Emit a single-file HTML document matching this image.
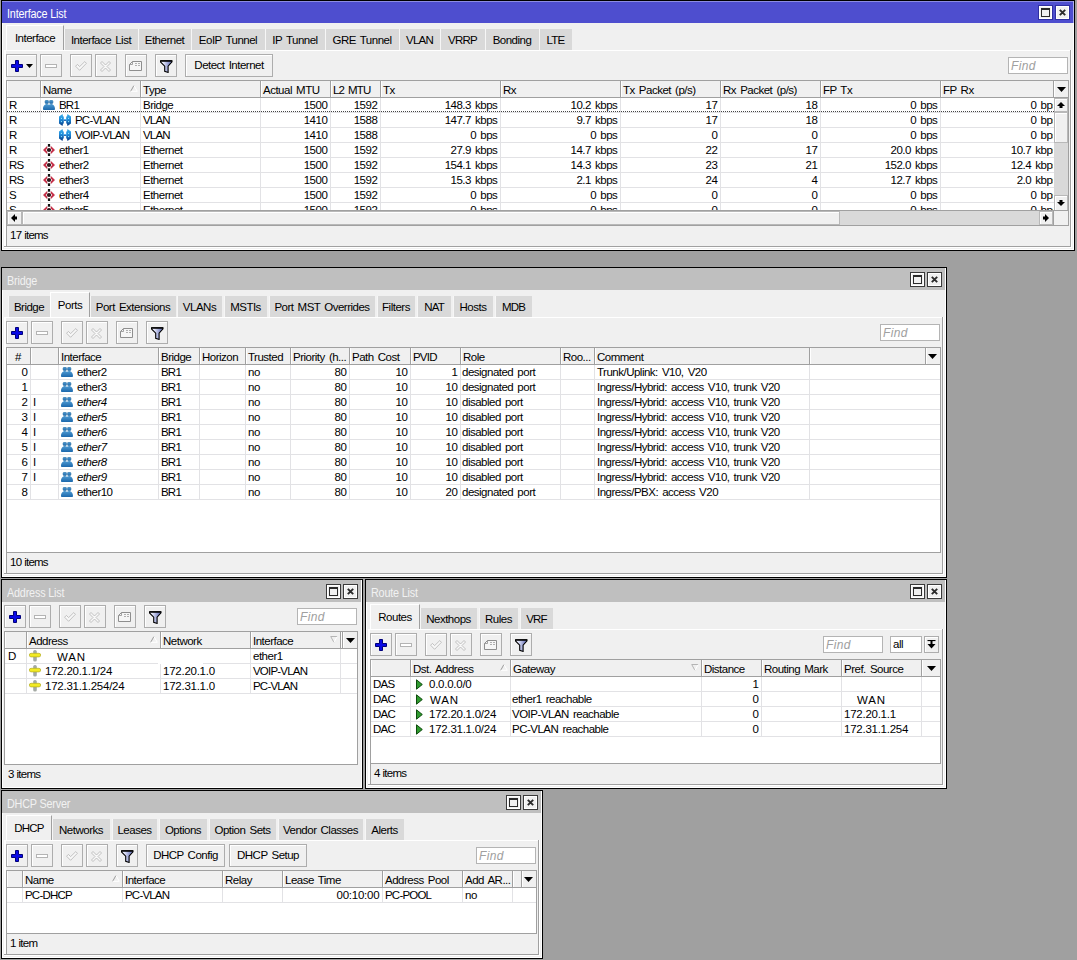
<!DOCTYPE html>
<html><head><meta charset="utf-8"><title>WinBox</title>
<style>
html,body{margin:0;padding:0}
body{width:1077px;height:960px;overflow:hidden;background:#a0a0a0;position:relative;font-family:"Liberation Sans",sans-serif;font-size:11px;color:#000}
div,svg{position:absolute;box-sizing:content-box}
.fr{background:#000}
.wn{background:#fff}
.bg{background:#f0f0f0}
.ta{background:#4e4ecf}
.ti{background:#bfbfbf}
.t{height:15px;line-height:15px;white-space:nowrap;letter-spacing:-.5px;word-spacing:1.4px;font-size:11.5px}
.tt{height:15px;line-height:15px;white-space:nowrap;color:#fff;font-size:12px;letter-spacing:-.2px;transform:scaleX(.9);transform-origin:0 0}
.tt.i{color:#f2f2f2}
.n{letter-spacing:-.25px}
.u{letter-spacing:-.8px}
.s{letter-spacing:-.75px;word-spacing:.4px}
.c{text-align:center}
.r{text-align:right}
.it{font-style:italic}
.fi{font-style:italic;color:#a0a0a0;font-size:12px;letter-spacing:.35px}
.b{border:1px solid #adadad;background:#f0f0f0;box-shadow:inset 1px 1px 0 #fff}
.wb{border:1px solid #3a3a3a;background:#f0f0f0;box-shadow:inset 1px 1px 0 #fff,inset -1px -1px 0 #fff}
.wa{border-color:#2e2ea2}
.tab{background:#d9d9d9;border-left:1px solid #f6f6f6}
.tab.a{background:#f0f0f0;border-left:1px solid #fff;border-top:1px solid #fff;border-right:1px solid #a0a0a0}
.fd{border:1px solid #b4b4b4;background:#fff}
.hd{background:#f0f0f0;border-left:1px solid #fff;border-right:1px solid #a0a0a0}
.gl{background:#e2e2e5}
.ln{background:#a0a0a0}
.wl{background:#fff}
.tb{background:#fff;border:1px solid #a0a0a0}
.sb{background:#d9d9d9}
.th{background:#f0f0f0;border:1px solid #b8b8b8;box-shadow:inset 1px 1px 0 #fff}
</style></head>
<body>
<div class="fr" style="left:1px;top:0px;width:1074px;height:251px;"></div>
<div class="wn" style="left:2px;top:1px;width:1072px;height:249px;"></div>
<div class="bg" style="left:3px;top:1px;width:1070px;height:248px;"></div>
<div class="ta" style="left:2px;top:1px;width:1071px;height:22px;"></div>
<div class="tt" style="left:7px;top:7px;">Interface List</div>
<div class="wb wa" style="left:1038px;top:5px;width:13px;height:13px;"></div>
<div class="wb wa" style="left:1055px;top:5px;width:13px;height:13px;"></div>
<svg style="left:1041px;top:8px" width="9" height="9" viewBox="0 0 9 9"><rect x=".5" y="1" width="8" height="7.500" fill="#f0f0f0" stroke="#2a2a2a" stroke-width="1"/><rect x="0" y="0" width="9" height="2" fill="#2a2a2a"/></svg>
<svg style="left:1059px;top:9px" width="7" height="7" viewBox="0 0 7 7"><path d="M.8 .8 L6.200 6.200 M6.200 .8 L.8 6.200" stroke="#2a2a2a" stroke-width="1.900"/></svg>
<div style="left:2px;top:1px;width:1071px;height:1px;background:#8c8ce4"></div>
<div style="left:1073px;top:1px;width:1px;height:22px;background:#b0b0ec"></div>
<div class="wl" style="left:4px;top:50px;width:1066px;height:1px;"></div>
<div class="wl" style="left:4px;top:50px;width:2px;height:197px;"></div>
<div class="ln" style="left:1070px;top:50px;width:1px;height:197px;"></div>
<div class="ln" style="left:4px;top:246px;width:1067px;height:1px;"></div>
<div class="wl" style="left:1071px;top:50px;width:1px;height:198px;"></div>
<div class="wl" style="left:4px;top:247px;width:1068px;height:1px;"></div>
<div class="tab a" style="left:6px;top:25px;width:56px;height:24px;"></div>
<div class="t c" style="left:8px;top:31px;width:54px;">Interface</div>
<div class="tab" style="left:64px;top:29px;width:73px;height:21px;"></div>
<div class="t c" style="left:64px;top:33px;width:74px;">Interface List</div>
<div class="tab" style="left:138px;top:29px;width:52px;height:21px;"></div>
<div class="t c" style="left:138px;top:33px;width:53px;">Ethernet</div>
<div class="tab" style="left:191px;top:29px;width:73px;height:21px;"></div>
<div class="t c" style="left:191px;top:33px;width:74px;">EoIP Tunnel</div>
<div class="tab" style="left:265px;top:29px;width:59px;height:21px;"></div>
<div class="t c" style="left:265px;top:33px;width:60px;">IP Tunnel</div>
<div class="tab" style="left:325px;top:29px;width:73px;height:21px;"></div>
<div class="t c" style="left:325px;top:33px;width:74px;">GRE Tunnel</div>
<div class="tab" style="left:399px;top:29px;width:40px;height:21px;"></div>
<div class="t c u" style="left:399px;top:33px;width:41px;">VLAN</div>
<div class="tab" style="left:440px;top:29px;width:44px;height:21px;"></div>
<div class="t c u" style="left:440px;top:33px;width:45px;">VRRP</div>
<div class="tab" style="left:485px;top:29px;width:53px;height:21px;"></div>
<div class="t c" style="left:485px;top:33px;width:54px;">Bonding</div>
<div class="tab" style="left:539px;top:29px;width:32px;height:21px;"></div>
<div class="t c u" style="left:539px;top:33px;width:33px;">LTE</div>
<div class="b" style="left:6px;top:54px;width:29px;height:21px;"></div>
<svg style="left:11px;top:60px" width="12" height="12" viewBox="0 0 12 12"><path d="M4.5 .5h3v4h4v3h-4v4h-3v-4h-4v-3h4z" fill="#0a0ae6" stroke="#00007a" stroke-width="1"/></svg>
<svg style="left:26px;top:64px" width="7" height="4" viewBox="0 0 7 4"><path d="M0 0h7l-3.5 4z" fill="#000"/></svg>
<div class="b" style="left:40px;top:54px;width:20px;height:21px;"></div>
<svg style="left:45px;top:64px" width="12" height="4" viewBox="0 0 12 4"><rect x=".5" y=".5" width="11" height="3" fill="#fff" stroke="#b4b4b4"/></svg>
<div class="b" style="left:70px;top:54px;width:20px;height:21px;"></div>
<svg style="left:75px;top:61px" width="12" height="10" viewBox="0 0 12 10"><path d="M.6 5.200 L2.400 3.400 L4.600 5.600 L9.800 .6 L11.400 2.300 L4.600 9.300 Z" fill="#f8f8f8" stroke="#b4b4b4" stroke-width=".8"/></svg>
<div class="b" style="left:95px;top:54px;width:20px;height:21px;"></div>
<svg style="left:100px;top:61px" width="11" height="11" viewBox="0 0 11 11"><path d="M.5 2 L2 .5 L5.500 4 L9 .5 L10.500 2 L7 5.500 L10.500 9 L9 10.500 L5.500 7 L2 10.500 L.5 9 L4 5.500 Z" fill="#f8f8f8" stroke="#b4b4b4" stroke-width=".8"/></svg>
<div class="b" style="left:125px;top:54px;width:20px;height:21px;"></div>
<svg style="left:129px;top:61px" width="13" height="10" viewBox="0 0 13 10"><path d="M3.500 .5h9v9h-12v-6z" fill="#f6f6f6" stroke="#8e8e8e"/><path d="M3.500 .5v3h-3" fill="none" stroke="#8e8e8e" stroke-width=".8"/><path d="M6 2.500h2M9 2.500h2M6 4.500h2M9 4.500h2" stroke="#b0b0b0" stroke-width="1"/></svg>
<div class="b" style="left:155px;top:54px;width:20px;height:21px;"></div>
<svg style="left:160px;top:60px" width="13" height="13" viewBox="0 0 13 13"><defs><linearGradient id="fg" x1="0" y1="0" x2="1" y2="0"><stop offset=".2" stop-color="#eef0ff"/><stop offset=".8" stop-color="#7c86c4"/></linearGradient></defs><path d="M.5 .7 H12 V1.900 L8.100 6.200 V12.400 L4.700 11.300 V6.200 L.5 1.900 Z" fill="url(#fg)" stroke="#000" stroke-width="1.100" stroke-linejoin="miter"/><path d="M.5 1 H12" stroke="#000" stroke-width="1.400"/></svg>
<div class="b" style="left:185px;top:54px;width:86px;height:21px;"></div>
<div class="t c" style="left:185px;top:58px;width:88px;">Detect Internet</div>
<div class="fd" style="left:1008px;top:57px;width:58px;height:15px;"></div>
<div class="t fi" style="left:1011px;top:59px;">Find</div>
<div class="tb" style="left:6px;top:80px;width:1061px;height:144px;"></div>
<div class="bg" style="left:7px;top:81px;width:1061px;height:16px;"></div>
<div class="ln" style="left:7px;top:97px;width:1061px;height:1px;"></div>
<div class="wl" style="left:7px;top:81px;width:1px;height:16px;"></div>
<div class="ln" style="left:40px;top:81px;width:1px;height:16px;"></div>
<div class="wl" style="left:41px;top:81px;width:1px;height:16px;"></div>
<div class="ln" style="left:140px;top:81px;width:1px;height:16px;"></div>
<div class="t" style="left:43px;top:83px;">Name</div>
<div class="wl" style="left:141px;top:81px;width:1px;height:16px;"></div>
<div class="ln" style="left:260px;top:81px;width:1px;height:16px;"></div>
<div class="t" style="left:143px;top:83px;">Type</div>
<div class="wl" style="left:261px;top:81px;width:1px;height:16px;"></div>
<div class="ln" style="left:330px;top:81px;width:1px;height:16px;"></div>
<div class="t" style="left:263px;top:83px;">Actual MTU</div>
<div class="wl" style="left:331px;top:81px;width:1px;height:16px;"></div>
<div class="ln" style="left:380px;top:81px;width:1px;height:16px;"></div>
<div class="t u" style="left:333px;top:83px;">L2 MTU</div>
<div class="wl" style="left:381px;top:81px;width:1px;height:16px;"></div>
<div class="ln" style="left:500px;top:81px;width:1px;height:16px;"></div>
<div class="t" style="left:383px;top:83px;">Tx</div>
<div class="wl" style="left:501px;top:81px;width:1px;height:16px;"></div>
<div class="ln" style="left:620px;top:81px;width:1px;height:16px;"></div>
<div class="t" style="left:503px;top:83px;">Rx</div>
<div class="wl" style="left:621px;top:81px;width:1px;height:16px;"></div>
<div class="ln" style="left:720px;top:81px;width:1px;height:16px;"></div>
<div class="t" style="left:623px;top:83px;">Tx Packet (p/s)</div>
<div class="wl" style="left:721px;top:81px;width:1px;height:16px;"></div>
<div class="ln" style="left:820px;top:81px;width:1px;height:16px;"></div>
<div class="t" style="left:723px;top:83px;">Rx Packet (p/s)</div>
<div class="wl" style="left:821px;top:81px;width:1px;height:16px;"></div>
<div class="ln" style="left:940px;top:81px;width:1px;height:16px;"></div>
<div class="t" style="left:823px;top:83px;">FP Tx</div>
<div class="wl" style="left:941px;top:81px;width:1px;height:16px;"></div>
<div class="ln" style="left:1053px;top:81px;width:1px;height:16px;"></div>
<div class="t" style="left:943px;top:83px;">FP Rx</div>
<div class="wl" style="left:1054px;top:81px;width:1px;height:16px;"></div>
<svg style="left:130px;top:85px" width="8" height="7" viewBox="0 0 8 7"><path d="M.7 6.300 L3.900 .5" stroke="#9a9a9a" stroke-width="1" fill="none"/><path d="M3.900 .5 L7.300 6.300 L.7 6.300" stroke="#fff" stroke-width="1" fill="none"/></svg>
<svg style="left:1057px;top:87px" width="9" height="5" viewBox="0 0 9 5"><path d="M0 0h9l-4.500 5z" fill="#000"/></svg>
<div style="left:7px;top:98px;width:1047px;height:113px;overflow:hidden"><div style="left:-7px;top:-98px;width:1077px;height:960px">
<div class="gl" style="left:7px;top:112px;width:1047px;height:1px;"></div>
<div class="gl" style="left:7px;top:127px;width:1047px;height:1px;"></div>
<div class="gl" style="left:7px;top:142px;width:1047px;height:1px;"></div>
<div class="gl" style="left:7px;top:157px;width:1047px;height:1px;"></div>
<div class="gl" style="left:7px;top:172px;width:1047px;height:1px;"></div>
<div class="gl" style="left:7px;top:187px;width:1047px;height:1px;"></div>
<div class="gl" style="left:7px;top:202px;width:1047px;height:1px;"></div>
<div class="gl" style="left:7px;top:217px;width:1047px;height:1px;"></div>
<div class="gl" style="left:40px;top:98px;width:1px;height:120px;"></div>
<div class="gl" style="left:140px;top:98px;width:1px;height:120px;"></div>
<div class="gl" style="left:260px;top:98px;width:1px;height:120px;"></div>
<div class="gl" style="left:330px;top:98px;width:1px;height:120px;"></div>
<div class="gl" style="left:380px;top:98px;width:1px;height:120px;"></div>
<div class="gl" style="left:500px;top:98px;width:1px;height:120px;"></div>
<div class="gl" style="left:620px;top:98px;width:1px;height:120px;"></div>
<div class="gl" style="left:720px;top:98px;width:1px;height:120px;"></div>
<div class="gl" style="left:820px;top:98px;width:1px;height:120px;"></div>
<div class="gl" style="left:940px;top:98px;width:1px;height:120px;"></div>
<div class="t" style="left:9px;top:98px;">R</div>
<svg style="left:43px;top:100px" width="12" height="10" viewBox="0 0 12 10"><defs><linearGradient id="bg1" x1="0" y1="0" x2="0" y2="1"><stop offset="0" stop-color="#4f9bd2"/><stop offset="1" stop-color="#1c68ac"/></linearGradient></defs><g fill="url(#bg1)"><circle cx="3.800" cy="1.900" r="1.900" stroke="#2d6f9f" stroke-width=".5"/><circle cx="8.200" cy="1.900" r="1.900" stroke="#2d6f9f" stroke-width=".5"/><path d="M0 9 C0 6.200 1.600 3.900 3.900 3.900 C5.200 3.900 6 4.800 6 4.800 C6 4.800 6.800 3.900 8.100 3.900 C10.400 3.900 12 6.200 12 9 C12 9.700 11.500 10 11 10 H1 C.5 10 0 9.700 0 9 Z"/></g></svg>
<div class="t u" style="left:59px;top:98px;">BR1</div>
<div class="t" style="left:143px;top:98px;">Bridge</div>
<div class="t r" style="left:217.3px;top:98px;width:110px;">1500</div>
<div class="t r" style="left:267.3px;top:98px;width:110px;">1592</div>
<div class="t r" style="left:387.3px;top:98px;width:110px;">148.3 kbps</div>
<div class="t r" style="left:507.3px;top:98px;width:110px;">10.2 kbps</div>
<div class="t r" style="left:607.3px;top:98px;width:110px;">17</div>
<div class="t r" style="left:707.3px;top:98px;width:110px;">18</div>
<div class="t r" style="left:827.3px;top:98px;width:110px;">0 bps</div>
<div class="t" style="left:9px;top:113px;">R</div>
<svg style="left:59px;top:114px" width="12" height="12" viewBox="0 0 12 12"><defs><linearGradient id="vg" x1="0" y1="0" x2="0" y2="1"><stop offset="0" stop-color="#3fb0ea"/><stop offset=".45" stop-color="#1d8bdb"/><stop offset="1" stop-color="#0a3a82"/></linearGradient></defs><g fill="url(#vg)"><path d="M3.500 0 L0 2.500 V9.500 L3.500 12 L3.900 10.200 L4.800 9 V3 L3.900 1.800 Z"/><path d="M8.500 0 L12 2.500 V9.500 L8.500 12 L8.100 10.200 L7.200 9 V3 L8.100 1.800 Z"/><rect x="4.800" y="5.200" width="2.400" height="1.700"/></g><g fill="#a8f4ff"><rect x="1.900" y="3.900" width="1" height="1"/><rect x="1.900" y="7.100" width="1" height="1"/><rect x="9.100" y="3.900" width="1" height="1"/><rect x="9.100" y="7.100" width="1" height="1"/></g></svg>
<div class="t u" style="left:75px;top:113px;">PC-VLAN</div>
<div class="t u" style="left:143px;top:113px;">VLAN</div>
<div class="t r" style="left:217.3px;top:113px;width:110px;">1410</div>
<div class="t r" style="left:267.3px;top:113px;width:110px;">1588</div>
<div class="t r" style="left:387.3px;top:113px;width:110px;">147.7 kbps</div>
<div class="t r" style="left:507.3px;top:113px;width:110px;">9.7 kbps</div>
<div class="t r" style="left:607.3px;top:113px;width:110px;">17</div>
<div class="t r" style="left:707.3px;top:113px;width:110px;">18</div>
<div class="t r" style="left:827.3px;top:113px;width:110px;">0 bps</div>
<div class="t" style="left:9px;top:128px;">R</div>
<svg style="left:59px;top:129px" width="12" height="12" viewBox="0 0 12 12"><defs><linearGradient id="vg" x1="0" y1="0" x2="0" y2="1"><stop offset="0" stop-color="#3fb0ea"/><stop offset=".45" stop-color="#1d8bdb"/><stop offset="1" stop-color="#0a3a82"/></linearGradient></defs><g fill="url(#vg)"><path d="M3.500 0 L0 2.500 V9.500 L3.500 12 L3.900 10.200 L4.800 9 V3 L3.900 1.800 Z"/><path d="M8.500 0 L12 2.500 V9.500 L8.500 12 L8.100 10.200 L7.200 9 V3 L8.100 1.800 Z"/><rect x="4.800" y="5.200" width="2.400" height="1.700"/></g><g fill="#a8f4ff"><rect x="1.900" y="3.900" width="1" height="1"/><rect x="1.900" y="7.100" width="1" height="1"/><rect x="9.100" y="3.900" width="1" height="1"/><rect x="9.100" y="7.100" width="1" height="1"/></g></svg>
<div class="t u" style="left:75px;top:128px;">VOIP-VLAN</div>
<div class="t u" style="left:143px;top:128px;">VLAN</div>
<div class="t r" style="left:217.3px;top:128px;width:110px;">1410</div>
<div class="t r" style="left:267.3px;top:128px;width:110px;">1588</div>
<div class="t r" style="left:387.3px;top:128px;width:110px;">0 bps</div>
<div class="t r" style="left:507.3px;top:128px;width:110px;">0 bps</div>
<div class="t r" style="left:607.3px;top:128px;width:110px;">0</div>
<div class="t r" style="left:707.3px;top:128px;width:110px;">0</div>
<div class="t r" style="left:827.3px;top:128px;width:110px;">0 bps</div>
<div class="t" style="left:9px;top:143px;">R</div>
<svg style="left:43px;top:144px" width="12" height="12" viewBox="0 0 12 12"><path d="M4.300 1.700 L0 6 L4.300 10.300 V7.700 L2.800 6 L4.300 4.300 Z M7.700 1.700 L12 6 L7.700 10.300 V7.700 L9.200 6 L7.700 4.300 Z" fill="#c42f48"/><circle cx="6" cy="6" r="2.100" fill="#2c1419"/><rect x="4.900" y="0" width="2.200" height="2.700" fill="#111"/><rect x="4.900" y="9.300" width="2.200" height="2.700" fill="#111"/></svg>
<div class="t" style="left:59px;top:143px;">ether1</div>
<div class="t" style="left:143px;top:143px;">Ethernet</div>
<div class="t r" style="left:217.3px;top:143px;width:110px;">1500</div>
<div class="t r" style="left:267.3px;top:143px;width:110px;">1592</div>
<div class="t r" style="left:387.3px;top:143px;width:110px;">27.9 kbps</div>
<div class="t r" style="left:507.3px;top:143px;width:110px;">14.7 kbps</div>
<div class="t r" style="left:607.3px;top:143px;width:110px;">22</div>
<div class="t r" style="left:707.3px;top:143px;width:110px;">17</div>
<div class="t r" style="left:827.3px;top:143px;width:110px;">20.0 kbps</div>
<div class="t u" style="left:9px;top:158px;">RS</div>
<svg style="left:43px;top:159px" width="12" height="12" viewBox="0 0 12 12"><path d="M4.300 1.700 L0 6 L4.300 10.300 V7.700 L2.800 6 L4.300 4.300 Z M7.700 1.700 L12 6 L7.700 10.300 V7.700 L9.200 6 L7.700 4.300 Z" fill="#c42f48"/><circle cx="6" cy="6" r="2.100" fill="#2c1419"/><rect x="4.900" y="0" width="2.200" height="2.700" fill="#111"/><rect x="4.900" y="9.300" width="2.200" height="2.700" fill="#111"/></svg>
<div class="t" style="left:59px;top:158px;">ether2</div>
<div class="t" style="left:143px;top:158px;">Ethernet</div>
<div class="t r" style="left:217.3px;top:158px;width:110px;">1500</div>
<div class="t r" style="left:267.3px;top:158px;width:110px;">1592</div>
<div class="t r" style="left:387.3px;top:158px;width:110px;">154.1 kbps</div>
<div class="t r" style="left:507.3px;top:158px;width:110px;">14.3 kbps</div>
<div class="t r" style="left:607.3px;top:158px;width:110px;">23</div>
<div class="t r" style="left:707.3px;top:158px;width:110px;">21</div>
<div class="t r" style="left:827.3px;top:158px;width:110px;">152.0 kbps</div>
<div class="t u" style="left:9px;top:173px;">RS</div>
<svg style="left:43px;top:174px" width="12" height="12" viewBox="0 0 12 12"><path d="M4.300 1.700 L0 6 L4.300 10.300 V7.700 L2.800 6 L4.300 4.300 Z M7.700 1.700 L12 6 L7.700 10.300 V7.700 L9.200 6 L7.700 4.300 Z" fill="#c42f48"/><circle cx="6" cy="6" r="2.100" fill="#2c1419"/><rect x="4.900" y="0" width="2.200" height="2.700" fill="#111"/><rect x="4.900" y="9.300" width="2.200" height="2.700" fill="#111"/></svg>
<div class="t" style="left:59px;top:173px;">ether3</div>
<div class="t" style="left:143px;top:173px;">Ethernet</div>
<div class="t r" style="left:217.3px;top:173px;width:110px;">1500</div>
<div class="t r" style="left:267.3px;top:173px;width:110px;">1592</div>
<div class="t r" style="left:387.3px;top:173px;width:110px;">15.3 kbps</div>
<div class="t r" style="left:507.3px;top:173px;width:110px;">2.1 kbps</div>
<div class="t r" style="left:607.3px;top:173px;width:110px;">24</div>
<div class="t r" style="left:707.3px;top:173px;width:110px;">4</div>
<div class="t r" style="left:827.3px;top:173px;width:110px;">12.7 kbps</div>
<div class="t" style="left:9px;top:188px;">S</div>
<svg style="left:43px;top:189px" width="12" height="12" viewBox="0 0 12 12"><path d="M4.300 1.700 L0 6 L4.300 10.300 V7.700 L2.800 6 L4.300 4.300 Z M7.700 1.700 L12 6 L7.700 10.300 V7.700 L9.200 6 L7.700 4.300 Z" fill="#c42f48"/><circle cx="6" cy="6" r="2.100" fill="#2c1419"/><rect x="4.900" y="0" width="2.200" height="2.700" fill="#111"/><rect x="4.900" y="9.300" width="2.200" height="2.700" fill="#111"/></svg>
<div class="t" style="left:59px;top:188px;">ether4</div>
<div class="t" style="left:143px;top:188px;">Ethernet</div>
<div class="t r" style="left:217.3px;top:188px;width:110px;">1500</div>
<div class="t r" style="left:267.3px;top:188px;width:110px;">1592</div>
<div class="t r" style="left:387.3px;top:188px;width:110px;">0 bps</div>
<div class="t r" style="left:507.3px;top:188px;width:110px;">0 bps</div>
<div class="t r" style="left:607.3px;top:188px;width:110px;">0</div>
<div class="t r" style="left:707.3px;top:188px;width:110px;">0</div>
<div class="t r" style="left:827.3px;top:188px;width:110px;">0 bps</div>
<div class="t" style="left:9px;top:203px;">S</div>
<svg style="left:43px;top:204px" width="12" height="12" viewBox="0 0 12 12"><path d="M4.300 1.700 L0 6 L4.300 10.300 V7.700 L2.800 6 L4.300 4.300 Z M7.700 1.700 L12 6 L7.700 10.300 V7.700 L9.200 6 L7.700 4.300 Z" fill="#c42f48"/><circle cx="6" cy="6" r="2.100" fill="#2c1419"/><rect x="4.900" y="0" width="2.200" height="2.700" fill="#111"/><rect x="4.900" y="9.300" width="2.200" height="2.700" fill="#111"/></svg>
<div class="t" style="left:59px;top:203px;">ether5</div>
<div class="t" style="left:143px;top:203px;">Ethernet</div>
<div class="t r" style="left:217.3px;top:203px;width:110px;">1500</div>
<div class="t r" style="left:267.3px;top:203px;width:110px;">1592</div>
<div class="t r" style="left:387.3px;top:203px;width:110px;">0 bps</div>
<div class="t r" style="left:507.3px;top:203px;width:110px;">0 bps</div>
<div class="t r" style="left:607.3px;top:203px;width:110px;">0</div>
<div class="t r" style="left:707.3px;top:203px;width:110px;">0</div>
<div class="t r" style="left:827.3px;top:203px;width:110px;">0 bps</div>
<div style="left:941px;top:98px;width:111.6px;height:113px;overflow:hidden"><div style="left:-941px;top:-98px;width:1077px;height:960px">
<div class="t r" style="left:947.5999999999999px;top:98px;width:110px;">0 bps</div>
<div class="t r" style="left:947.5999999999999px;top:113px;width:110px;">0 bps</div>
<div class="t r" style="left:947.5999999999999px;top:128px;width:110px;">0 bps</div>
<div class="t r" style="left:947.5999999999999px;top:143px;width:110px;">10.7 kbps</div>
<div class="t r" style="left:947.5999999999999px;top:158px;width:110px;">12.4 kbps</div>
<div class="t r" style="left:947.5999999999999px;top:173px;width:110px;">2.0 kbps</div>
<div class="t r" style="left:947.5999999999999px;top:188px;width:110px;">0 bps</div>
<div class="t r" style="left:947.5999999999999px;top:203px;width:110px;">0 bps</div>
</div></div>
<div style="left:7px;top:111px;width:1047px;height:0px;border-top:1px dotted #444"></div>
</div></div>
<div class="sb" style="left:1054px;top:98px;width:14px;height:113px;"></div>
<div class="th" style="left:1054px;top:98px;width:12px;height:12px;"></div>
<svg style="left:1057px;top:102px" width="8" height="6" viewBox="0 0 8 6"><path d="M4 0 L8 4 H5.500 V6 H2.500 V4 H0 Z" fill="#000"/></svg>
<div class="th" style="left:1054px;top:112px;width:12px;height:29px;"></div>
<div class="th" style="left:1054px;top:195px;width:12px;height:14px;"></div>
<svg style="left:1057px;top:200px" width="8" height="6" viewBox="0 0 8 6"><path d="M2.500 0 H5.500 V2 H8 L4 6 L0 2 H2.500 Z" fill="#000"/></svg>
<div class="ln" style="left:7px;top:210px;width:1061px;height:1px;"></div>
<div class="sb" style="left:7px;top:211px;width:1047px;height:14px;"></div>
<div class="th" style="left:7px;top:211px;width:13px;height:12px;"></div>
<svg style="left:11px;top:214px" width="6" height="8" viewBox="0 0 6 8"><path d="M6 2.500 V5.500 H4 V8 L0 4 L4 0 V2.500 Z" fill="#000"/></svg>
<div class="th" style="left:22px;top:211px;width:816px;height:12px;"></div>
<div class="th" style="left:1039px;top:211px;width:12px;height:12px;"></div>
<svg style="left:1043px;top:214px" width="6" height="8" viewBox="0 0 6 8"><path d="M0 2.500 V5.500 H2 V8 L6 4 L2 0 V2.500 Z" fill="#000"/></svg>
<div class="bg" style="left:1054px;top:211px;width:14px;height:14px;"></div>
<div class="ln" style="left:1053px;top:211px;width:1px;height:14px;"></div>
<div class="ln" style="left:6px;top:226px;width:1px;height:20px;"></div>
<div class="t s" style="left:10px;top:228px;">17 items</div>
<div class="fr" style="left:1px;top:267px;width:946px;height:311px;"></div>
<div class="wn" style="left:2px;top:268px;width:944px;height:309px;"></div>
<div class="bg" style="left:3px;top:268px;width:942px;height:308px;"></div>
<div class="ti" style="left:2px;top:268px;width:943px;height:22px;"></div>
<div class="tt i" style="left:7px;top:274px;">Bridge</div>
<div class="wb" style="left:910px;top:272px;width:13px;height:13px;"></div>
<div class="wb" style="left:927px;top:272px;width:13px;height:13px;"></div>
<svg style="left:913px;top:275px" width="9" height="9" viewBox="0 0 9 9"><rect x=".5" y="1" width="8" height="7.500" fill="#f0f0f0" stroke="#2a2a2a" stroke-width="1"/><rect x="0" y="0" width="9" height="2" fill="#2a2a2a"/></svg>
<svg style="left:931px;top:276px" width="7" height="7" viewBox="0 0 7 7"><path d="M.8 .8 L6.200 6.200 M6.200 .8 L.8 6.200" stroke="#2a2a2a" stroke-width="1.900"/></svg>
<div class="wl" style="left:4px;top:317px;width:938px;height:1px;"></div>
<div class="wl" style="left:4px;top:317px;width:2px;height:257px;"></div>
<div class="ln" style="left:942px;top:317px;width:1px;height:257px;"></div>
<div class="ln" style="left:4px;top:573px;width:939px;height:1px;"></div>
<div class="wl" style="left:943px;top:317px;width:1px;height:258px;"></div>
<div class="wl" style="left:4px;top:574px;width:940px;height:1px;"></div>
<div class="tab" style="left:8px;top:296px;width:41px;height:21px;"></div>
<div class="t c" style="left:8px;top:300px;width:42px;">Bridge</div>
<div class="tab a" style="left:50px;top:292px;width:38px;height:24px;"></div>
<div class="t c" style="left:52px;top:298px;width:36px;">Ports</div>
<div class="tab" style="left:90px;top:296px;width:85px;height:21px;"></div>
<div class="t c" style="left:90px;top:300px;width:86px;">Port Extensions</div>
<div class="tab" style="left:177px;top:296px;width:44px;height:21px;"></div>
<div class="t c" style="left:177px;top:300px;width:45px;">VLANs</div>
<div class="tab" style="left:224px;top:296px;width:42px;height:21px;"></div>
<div class="t c" style="left:224px;top:300px;width:43px;">MSTIs</div>
<div class="tab" style="left:269px;top:296px;width:105px;height:21px;"></div>
<div class="t c" style="left:269px;top:300px;width:106px;">Port MST Overrides</div>
<div class="tab" style="left:377px;top:296px;width:37px;height:21px;"></div>
<div class="t c" style="left:377px;top:300px;width:38px;">Filters</div>
<div class="tab" style="left:417px;top:296px;width:33px;height:21px;"></div>
<div class="t c u" style="left:417px;top:300px;width:34px;">NAT</div>
<div class="tab" style="left:453px;top:296px;width:39px;height:21px;"></div>
<div class="t c" style="left:453px;top:300px;width:40px;">Hosts</div>
<div class="tab" style="left:495px;top:296px;width:36px;height:21px;"></div>
<div class="t c u" style="left:495px;top:300px;width:37px;">MDB</div>
<div class="b" style="left:6px;top:321px;width:20px;height:21px;"></div>
<svg style="left:11px;top:327px" width="12" height="12" viewBox="0 0 12 12"><path d="M4.5 .5h3v4h4v3h-4v4h-3v-4h-4v-3h4z" fill="#0a0ae6" stroke="#00007a" stroke-width="1"/></svg>
<div class="b" style="left:31px;top:321px;width:20px;height:21px;"></div>
<svg style="left:36px;top:331px" width="12" height="4" viewBox="0 0 12 4"><rect x=".5" y=".5" width="11" height="3" fill="#fff" stroke="#b4b4b4"/></svg>
<div class="b" style="left:61px;top:321px;width:20px;height:21px;"></div>
<svg style="left:66px;top:328px" width="12" height="10" viewBox="0 0 12 10"><path d="M.6 5.200 L2.400 3.400 L4.600 5.600 L9.800 .6 L11.400 2.300 L4.600 9.300 Z" fill="#f8f8f8" stroke="#b4b4b4" stroke-width=".8"/></svg>
<div class="b" style="left:86px;top:321px;width:20px;height:21px;"></div>
<svg style="left:91px;top:328px" width="11" height="11" viewBox="0 0 11 11"><path d="M.5 2 L2 .5 L5.500 4 L9 .5 L10.500 2 L7 5.500 L10.500 9 L9 10.500 L5.500 7 L2 10.500 L.5 9 L4 5.500 Z" fill="#f8f8f8" stroke="#b4b4b4" stroke-width=".8"/></svg>
<div class="b" style="left:116px;top:321px;width:20px;height:21px;"></div>
<svg style="left:120px;top:328px" width="13" height="10" viewBox="0 0 13 10"><path d="M3.500 .5h9v9h-12v-6z" fill="#f6f6f6" stroke="#8e8e8e"/><path d="M3.500 .5v3h-3" fill="none" stroke="#8e8e8e" stroke-width=".8"/><path d="M6 2.500h2M9 2.500h2M6 4.500h2M9 4.500h2" stroke="#b0b0b0" stroke-width="1"/></svg>
<div class="b" style="left:146px;top:321px;width:20px;height:21px;"></div>
<svg style="left:151px;top:327px" width="13" height="13" viewBox="0 0 13 13"><defs><linearGradient id="fg" x1="0" y1="0" x2="1" y2="0"><stop offset=".2" stop-color="#eef0ff"/><stop offset=".8" stop-color="#7c86c4"/></linearGradient></defs><path d="M.5 .7 H12 V1.900 L8.100 6.200 V12.400 L4.700 11.300 V6.200 L.5 1.900 Z" fill="url(#fg)" stroke="#000" stroke-width="1.100" stroke-linejoin="miter"/><path d="M.5 1 H12" stroke="#000" stroke-width="1.400"/></svg>
<div class="fd" style="left:880px;top:324px;width:58px;height:15px;"></div>
<div class="t fi" style="left:883px;top:326px;">Find</div>
<div class="tb" style="left:6px;top:347px;width:933px;height:204px;"></div>
<div class="bg" style="left:7px;top:348px;width:933px;height:16px;"></div>
<div class="ln" style="left:7px;top:364px;width:933px;height:1px;"></div>
<div class="wl" style="left:7px;top:348px;width:1px;height:16px;"></div>
<div class="ln" style="left:30px;top:348px;width:1px;height:16px;"></div>
<div class="wl" style="left:31px;top:348px;width:1px;height:16px;"></div>
<div class="ln" style="left:58px;top:348px;width:1px;height:16px;"></div>
<div class="wl" style="left:59px;top:348px;width:1px;height:16px;"></div>
<div class="ln" style="left:158px;top:348px;width:1px;height:16px;"></div>
<div class="t" style="left:61px;top:350px;">Interface</div>
<div class="wl" style="left:159px;top:348px;width:1px;height:16px;"></div>
<div class="ln" style="left:199px;top:348px;width:1px;height:16px;"></div>
<div class="t" style="left:161px;top:350px;">Bridge</div>
<div class="wl" style="left:200px;top:348px;width:1px;height:16px;"></div>
<div class="ln" style="left:245px;top:348px;width:1px;height:16px;"></div>
<div class="t" style="left:202px;top:350px;">Horizon</div>
<div class="wl" style="left:246px;top:348px;width:1px;height:16px;"></div>
<div class="ln" style="left:290px;top:348px;width:1px;height:16px;"></div>
<div class="t" style="left:248px;top:350px;">Trusted</div>
<div class="wl" style="left:291px;top:348px;width:1px;height:16px;"></div>
<div class="ln" style="left:349px;top:348px;width:1px;height:16px;"></div>
<div class="t" style="left:293px;top:350px;">Priority (h...</div>
<div class="wl" style="left:350px;top:348px;width:1px;height:16px;"></div>
<div class="ln" style="left:410px;top:348px;width:1px;height:16px;"></div>
<div class="t" style="left:352px;top:350px;">Path Cost</div>
<div class="wl" style="left:411px;top:348px;width:1px;height:16px;"></div>
<div class="ln" style="left:460px;top:348px;width:1px;height:16px;"></div>
<div class="t u" style="left:413px;top:350px;">PVID</div>
<div class="wl" style="left:461px;top:348px;width:1px;height:16px;"></div>
<div class="ln" style="left:560px;top:348px;width:1px;height:16px;"></div>
<div class="t" style="left:463px;top:350px;">Role</div>
<div class="wl" style="left:561px;top:348px;width:1px;height:16px;"></div>
<div class="ln" style="left:594px;top:348px;width:1px;height:16px;"></div>
<div class="t" style="left:563px;top:350px;">Roo...</div>
<div class="wl" style="left:595px;top:348px;width:1px;height:16px;"></div>
<div class="ln" style="left:809px;top:348px;width:1px;height:16px;"></div>
<div class="t" style="left:597px;top:350px;">Comment</div>
<div class="wl" style="left:810px;top:348px;width:1px;height:16px;"></div>
<div class="ln" style="left:925px;top:348px;width:1px;height:16px;"></div>
<div class="wl" style="left:926px;top:348px;width:1px;height:16px;"></div>
<div class="t" style="left:15px;top:350px;">#</div>
<svg style="left:928px;top:354px" width="9" height="5" viewBox="0 0 9 5"><path d="M0 0h9l-4.500 5z" fill="#000"/></svg>
<div class="gl" style="left:7px;top:379px;width:933px;height:1px;"></div>
<div class="gl" style="left:7px;top:394px;width:933px;height:1px;"></div>
<div class="gl" style="left:7px;top:409px;width:933px;height:1px;"></div>
<div class="gl" style="left:7px;top:424px;width:933px;height:1px;"></div>
<div class="gl" style="left:7px;top:439px;width:933px;height:1px;"></div>
<div class="gl" style="left:7px;top:454px;width:933px;height:1px;"></div>
<div class="gl" style="left:7px;top:469px;width:933px;height:1px;"></div>
<div class="gl" style="left:7px;top:484px;width:933px;height:1px;"></div>
<div class="gl" style="left:7px;top:499px;width:933px;height:1px;"></div>
<div class="gl" style="left:30px;top:365px;width:1px;height:135px;"></div>
<div class="gl" style="left:58px;top:365px;width:1px;height:135px;"></div>
<div class="gl" style="left:158px;top:365px;width:1px;height:135px;"></div>
<div class="gl" style="left:199px;top:365px;width:1px;height:135px;"></div>
<div class="gl" style="left:245px;top:365px;width:1px;height:135px;"></div>
<div class="gl" style="left:290px;top:365px;width:1px;height:135px;"></div>
<div class="gl" style="left:349px;top:365px;width:1px;height:135px;"></div>
<div class="gl" style="left:410px;top:365px;width:1px;height:135px;"></div>
<div class="gl" style="left:460px;top:365px;width:1px;height:135px;"></div>
<div class="gl" style="left:560px;top:365px;width:1px;height:135px;"></div>
<div class="gl" style="left:594px;top:365px;width:1px;height:135px;"></div>
<div class="gl" style="left:809px;top:365px;width:1px;height:135px;"></div>
<div class="t r" style="left:7.3px;top:365px;width:20px;">0</div>
<svg style="left:61px;top:367px" width="12" height="10" viewBox="0 0 12 10"><defs><linearGradient id="bg1" x1="0" y1="0" x2="0" y2="1"><stop offset="0" stop-color="#4f9bd2"/><stop offset="1" stop-color="#1c68ac"/></linearGradient></defs><g fill="url(#bg1)"><circle cx="3.800" cy="1.900" r="1.900" stroke="#2d6f9f" stroke-width=".5"/><circle cx="8.200" cy="1.900" r="1.900" stroke="#2d6f9f" stroke-width=".5"/><path d="M0 9 C0 6.200 1.600 3.900 3.900 3.900 C5.200 3.900 6 4.800 6 4.800 C6 4.800 6.800 3.900 8.100 3.900 C10.400 3.900 12 6.200 12 9 C12 9.700 11.500 10 11 10 H1 C.5 10 0 9.700 0 9 Z"/></g></svg>
<div class="t" style="left:77px;top:365px;">ether2</div>
<div class="t u" style="left:161px;top:365px;">BR1</div>
<div class="t" style="left:248px;top:365px;">no</div>
<div class="t r" style="left:236.3px;top:365px;width:110px;">80</div>
<div class="t r" style="left:297.3px;top:365px;width:110px;">10</div>
<div class="t r" style="left:347.3px;top:365px;width:110px;">1</div>
<div class="t" style="left:462px;top:365px;">designated port</div>
<div class="t" style="left:597px;top:365px;">Trunk/Uplink: V10, V20</div>
<div class="t r" style="left:7.3px;top:380px;width:20px;">1</div>
<svg style="left:61px;top:382px" width="12" height="10" viewBox="0 0 12 10"><defs><linearGradient id="bg1" x1="0" y1="0" x2="0" y2="1"><stop offset="0" stop-color="#4f9bd2"/><stop offset="1" stop-color="#1c68ac"/></linearGradient></defs><g fill="url(#bg1)"><circle cx="3.800" cy="1.900" r="1.900" stroke="#2d6f9f" stroke-width=".5"/><circle cx="8.200" cy="1.900" r="1.900" stroke="#2d6f9f" stroke-width=".5"/><path d="M0 9 C0 6.200 1.600 3.900 3.900 3.900 C5.200 3.900 6 4.800 6 4.800 C6 4.800 6.800 3.900 8.100 3.900 C10.400 3.900 12 6.200 12 9 C12 9.700 11.500 10 11 10 H1 C.5 10 0 9.700 0 9 Z"/></g></svg>
<div class="t" style="left:77px;top:380px;">ether3</div>
<div class="t u" style="left:161px;top:380px;">BR1</div>
<div class="t" style="left:248px;top:380px;">no</div>
<div class="t r" style="left:236.3px;top:380px;width:110px;">80</div>
<div class="t r" style="left:297.3px;top:380px;width:110px;">10</div>
<div class="t r" style="left:347.3px;top:380px;width:110px;">10</div>
<div class="t" style="left:462px;top:380px;">designated port</div>
<div class="t" style="left:597px;top:380px;">Ingress/Hybrid: access V10, trunk V20</div>
<div class="t r" style="left:7.3px;top:395px;width:20px;">2</div>
<div class="t" style="left:33px;top:395px;">I</div>
<svg style="left:61px;top:397px" width="12" height="10" viewBox="0 0 12 10"><defs><linearGradient id="bg1" x1="0" y1="0" x2="0" y2="1"><stop offset="0" stop-color="#4f9bd2"/><stop offset="1" stop-color="#1c68ac"/></linearGradient></defs><g fill="url(#bg1)"><circle cx="3.800" cy="1.900" r="1.900" stroke="#2d6f9f" stroke-width=".5"/><circle cx="8.200" cy="1.900" r="1.900" stroke="#2d6f9f" stroke-width=".5"/><path d="M0 9 C0 6.200 1.600 3.900 3.900 3.900 C5.200 3.900 6 4.800 6 4.800 C6 4.800 6.800 3.900 8.100 3.900 C10.400 3.900 12 6.200 12 9 C12 9.700 11.500 10 11 10 H1 C.5 10 0 9.700 0 9 Z"/></g></svg>
<div class="t it" style="left:77px;top:395px;">ether4</div>
<div class="t u" style="left:161px;top:395px;">BR1</div>
<div class="t" style="left:248px;top:395px;">no</div>
<div class="t r" style="left:236.3px;top:395px;width:110px;">80</div>
<div class="t r" style="left:297.3px;top:395px;width:110px;">10</div>
<div class="t r" style="left:347.3px;top:395px;width:110px;">10</div>
<div class="t" style="left:462px;top:395px;">disabled port</div>
<div class="t" style="left:597px;top:395px;">Ingress/Hybrid: access V10, trunk V20</div>
<div class="t r" style="left:7.3px;top:410px;width:20px;">3</div>
<div class="t" style="left:33px;top:410px;">I</div>
<svg style="left:61px;top:412px" width="12" height="10" viewBox="0 0 12 10"><defs><linearGradient id="bg1" x1="0" y1="0" x2="0" y2="1"><stop offset="0" stop-color="#4f9bd2"/><stop offset="1" stop-color="#1c68ac"/></linearGradient></defs><g fill="url(#bg1)"><circle cx="3.800" cy="1.900" r="1.900" stroke="#2d6f9f" stroke-width=".5"/><circle cx="8.200" cy="1.900" r="1.900" stroke="#2d6f9f" stroke-width=".5"/><path d="M0 9 C0 6.200 1.600 3.900 3.900 3.900 C5.200 3.900 6 4.800 6 4.800 C6 4.800 6.800 3.900 8.100 3.900 C10.400 3.900 12 6.200 12 9 C12 9.700 11.500 10 11 10 H1 C.5 10 0 9.700 0 9 Z"/></g></svg>
<div class="t it" style="left:77px;top:410px;">ether5</div>
<div class="t u" style="left:161px;top:410px;">BR1</div>
<div class="t" style="left:248px;top:410px;">no</div>
<div class="t r" style="left:236.3px;top:410px;width:110px;">80</div>
<div class="t r" style="left:297.3px;top:410px;width:110px;">10</div>
<div class="t r" style="left:347.3px;top:410px;width:110px;">10</div>
<div class="t" style="left:462px;top:410px;">disabled port</div>
<div class="t" style="left:597px;top:410px;">Ingress/Hybrid: access V10, trunk V20</div>
<div class="t r" style="left:7.3px;top:425px;width:20px;">4</div>
<div class="t" style="left:33px;top:425px;">I</div>
<svg style="left:61px;top:427px" width="12" height="10" viewBox="0 0 12 10"><defs><linearGradient id="bg1" x1="0" y1="0" x2="0" y2="1"><stop offset="0" stop-color="#4f9bd2"/><stop offset="1" stop-color="#1c68ac"/></linearGradient></defs><g fill="url(#bg1)"><circle cx="3.800" cy="1.900" r="1.900" stroke="#2d6f9f" stroke-width=".5"/><circle cx="8.200" cy="1.900" r="1.900" stroke="#2d6f9f" stroke-width=".5"/><path d="M0 9 C0 6.200 1.600 3.900 3.900 3.900 C5.200 3.900 6 4.800 6 4.800 C6 4.800 6.800 3.900 8.100 3.900 C10.400 3.900 12 6.200 12 9 C12 9.700 11.500 10 11 10 H1 C.5 10 0 9.700 0 9 Z"/></g></svg>
<div class="t it" style="left:77px;top:425px;">ether6</div>
<div class="t u" style="left:161px;top:425px;">BR1</div>
<div class="t" style="left:248px;top:425px;">no</div>
<div class="t r" style="left:236.3px;top:425px;width:110px;">80</div>
<div class="t r" style="left:297.3px;top:425px;width:110px;">10</div>
<div class="t r" style="left:347.3px;top:425px;width:110px;">10</div>
<div class="t" style="left:462px;top:425px;">disabled port</div>
<div class="t" style="left:597px;top:425px;">Ingress/Hybrid: access V10, trunk V20</div>
<div class="t r" style="left:7.3px;top:440px;width:20px;">5</div>
<div class="t" style="left:33px;top:440px;">I</div>
<svg style="left:61px;top:442px" width="12" height="10" viewBox="0 0 12 10"><defs><linearGradient id="bg1" x1="0" y1="0" x2="0" y2="1"><stop offset="0" stop-color="#4f9bd2"/><stop offset="1" stop-color="#1c68ac"/></linearGradient></defs><g fill="url(#bg1)"><circle cx="3.800" cy="1.900" r="1.900" stroke="#2d6f9f" stroke-width=".5"/><circle cx="8.200" cy="1.900" r="1.900" stroke="#2d6f9f" stroke-width=".5"/><path d="M0 9 C0 6.200 1.600 3.900 3.900 3.900 C5.200 3.900 6 4.800 6 4.800 C6 4.800 6.800 3.900 8.100 3.900 C10.400 3.900 12 6.200 12 9 C12 9.700 11.500 10 11 10 H1 C.5 10 0 9.700 0 9 Z"/></g></svg>
<div class="t it" style="left:77px;top:440px;">ether7</div>
<div class="t u" style="left:161px;top:440px;">BR1</div>
<div class="t" style="left:248px;top:440px;">no</div>
<div class="t r" style="left:236.3px;top:440px;width:110px;">80</div>
<div class="t r" style="left:297.3px;top:440px;width:110px;">10</div>
<div class="t r" style="left:347.3px;top:440px;width:110px;">10</div>
<div class="t" style="left:462px;top:440px;">disabled port</div>
<div class="t" style="left:597px;top:440px;">Ingress/Hybrid: access V10, trunk V20</div>
<div class="t r" style="left:7.3px;top:455px;width:20px;">6</div>
<div class="t" style="left:33px;top:455px;">I</div>
<svg style="left:61px;top:457px" width="12" height="10" viewBox="0 0 12 10"><defs><linearGradient id="bg1" x1="0" y1="0" x2="0" y2="1"><stop offset="0" stop-color="#4f9bd2"/><stop offset="1" stop-color="#1c68ac"/></linearGradient></defs><g fill="url(#bg1)"><circle cx="3.800" cy="1.900" r="1.900" stroke="#2d6f9f" stroke-width=".5"/><circle cx="8.200" cy="1.900" r="1.900" stroke="#2d6f9f" stroke-width=".5"/><path d="M0 9 C0 6.200 1.600 3.900 3.900 3.900 C5.200 3.900 6 4.800 6 4.800 C6 4.800 6.800 3.900 8.100 3.900 C10.400 3.900 12 6.200 12 9 C12 9.700 11.500 10 11 10 H1 C.5 10 0 9.700 0 9 Z"/></g></svg>
<div class="t it" style="left:77px;top:455px;">ether8</div>
<div class="t u" style="left:161px;top:455px;">BR1</div>
<div class="t" style="left:248px;top:455px;">no</div>
<div class="t r" style="left:236.3px;top:455px;width:110px;">80</div>
<div class="t r" style="left:297.3px;top:455px;width:110px;">10</div>
<div class="t r" style="left:347.3px;top:455px;width:110px;">10</div>
<div class="t" style="left:462px;top:455px;">disabled port</div>
<div class="t" style="left:597px;top:455px;">Ingress/Hybrid: access V10, trunk V20</div>
<div class="t r" style="left:7.3px;top:470px;width:20px;">7</div>
<div class="t" style="left:33px;top:470px;">I</div>
<svg style="left:61px;top:472px" width="12" height="10" viewBox="0 0 12 10"><defs><linearGradient id="bg1" x1="0" y1="0" x2="0" y2="1"><stop offset="0" stop-color="#4f9bd2"/><stop offset="1" stop-color="#1c68ac"/></linearGradient></defs><g fill="url(#bg1)"><circle cx="3.800" cy="1.900" r="1.900" stroke="#2d6f9f" stroke-width=".5"/><circle cx="8.200" cy="1.900" r="1.900" stroke="#2d6f9f" stroke-width=".5"/><path d="M0 9 C0 6.200 1.600 3.900 3.900 3.900 C5.200 3.900 6 4.800 6 4.800 C6 4.800 6.800 3.900 8.100 3.900 C10.400 3.900 12 6.200 12 9 C12 9.700 11.500 10 11 10 H1 C.5 10 0 9.700 0 9 Z"/></g></svg>
<div class="t it" style="left:77px;top:470px;">ether9</div>
<div class="t u" style="left:161px;top:470px;">BR1</div>
<div class="t" style="left:248px;top:470px;">no</div>
<div class="t r" style="left:236.3px;top:470px;width:110px;">80</div>
<div class="t r" style="left:297.3px;top:470px;width:110px;">10</div>
<div class="t r" style="left:347.3px;top:470px;width:110px;">10</div>
<div class="t" style="left:462px;top:470px;">disabled port</div>
<div class="t" style="left:597px;top:470px;">Ingress/Hybrid: access V10, trunk V20</div>
<div class="t r" style="left:7.3px;top:485px;width:20px;">8</div>
<svg style="left:61px;top:487px" width="12" height="10" viewBox="0 0 12 10"><defs><linearGradient id="bg1" x1="0" y1="0" x2="0" y2="1"><stop offset="0" stop-color="#4f9bd2"/><stop offset="1" stop-color="#1c68ac"/></linearGradient></defs><g fill="url(#bg1)"><circle cx="3.800" cy="1.900" r="1.900" stroke="#2d6f9f" stroke-width=".5"/><circle cx="8.200" cy="1.900" r="1.900" stroke="#2d6f9f" stroke-width=".5"/><path d="M0 9 C0 6.200 1.600 3.900 3.900 3.900 C5.200 3.900 6 4.800 6 4.800 C6 4.800 6.800 3.900 8.100 3.900 C10.400 3.900 12 6.200 12 9 C12 9.700 11.500 10 11 10 H1 C.5 10 0 9.700 0 9 Z"/></g></svg>
<div class="t" style="left:77px;top:485px;">ether10</div>
<div class="t u" style="left:161px;top:485px;">BR1</div>
<div class="t" style="left:248px;top:485px;">no</div>
<div class="t r" style="left:236.3px;top:485px;width:110px;">80</div>
<div class="t r" style="left:297.3px;top:485px;width:110px;">10</div>
<div class="t r" style="left:347.3px;top:485px;width:110px;">20</div>
<div class="t" style="left:462px;top:485px;">designated port</div>
<div class="t" style="left:597px;top:485px;">Ingress/PBX: access V20</div>
<div class="ln" style="left:6px;top:553px;width:1px;height:20px;"></div>
<div class="t s" style="left:10px;top:555px;">10 items</div>
<div class="fr" style="left:1px;top:579px;width:362px;height:210px;"></div>
<div class="wn" style="left:2px;top:580px;width:360px;height:208px;"></div>
<div class="bg" style="left:3px;top:580px;width:358px;height:207px;"></div>
<div class="ti" style="left:2px;top:580px;width:359px;height:22px;"></div>
<div class="tt i" style="left:7px;top:586px;">Address List</div>
<div class="wb" style="left:326px;top:584px;width:13px;height:13px;"></div>
<div class="wb" style="left:343px;top:584px;width:13px;height:13px;"></div>
<svg style="left:329px;top:587px" width="9" height="9" viewBox="0 0 9 9"><rect x=".5" y="1" width="8" height="7.500" fill="#f0f0f0" stroke="#2a2a2a" stroke-width="1"/><rect x="0" y="0" width="9" height="2" fill="#2a2a2a"/></svg>
<svg style="left:347px;top:588px" width="7" height="7" viewBox="0 0 7 7"><path d="M.8 .8 L6.200 6.200 M6.200 .8 L.8 6.200" stroke="#2a2a2a" stroke-width="1.900"/></svg>
<div class="b" style="left:4px;top:605px;width:20px;height:21px;"></div>
<svg style="left:9px;top:611px" width="12" height="12" viewBox="0 0 12 12"><path d="M4.5 .5h3v4h4v3h-4v4h-3v-4h-4v-3h4z" fill="#0a0ae6" stroke="#00007a" stroke-width="1"/></svg>
<div class="b" style="left:29px;top:605px;width:20px;height:21px;"></div>
<svg style="left:34px;top:615px" width="12" height="4" viewBox="0 0 12 4"><rect x=".5" y=".5" width="11" height="3" fill="#fff" stroke="#b4b4b4"/></svg>
<div class="b" style="left:59px;top:605px;width:20px;height:21px;"></div>
<svg style="left:64px;top:612px" width="12" height="10" viewBox="0 0 12 10"><path d="M.6 5.200 L2.400 3.400 L4.600 5.600 L9.800 .6 L11.400 2.300 L4.600 9.300 Z" fill="#f8f8f8" stroke="#b4b4b4" stroke-width=".8"/></svg>
<div class="b" style="left:84px;top:605px;width:20px;height:21px;"></div>
<svg style="left:89px;top:612px" width="11" height="11" viewBox="0 0 11 11"><path d="M.5 2 L2 .5 L5.500 4 L9 .5 L10.500 2 L7 5.500 L10.500 9 L9 10.500 L5.500 7 L2 10.500 L.5 9 L4 5.500 Z" fill="#f8f8f8" stroke="#b4b4b4" stroke-width=".8"/></svg>
<div class="b" style="left:114px;top:605px;width:20px;height:21px;"></div>
<svg style="left:118px;top:612px" width="13" height="10" viewBox="0 0 13 10"><path d="M3.500 .5h9v9h-12v-6z" fill="#f6f6f6" stroke="#8e8e8e"/><path d="M3.500 .5v3h-3" fill="none" stroke="#8e8e8e" stroke-width=".8"/><path d="M6 2.500h2M9 2.500h2M6 4.500h2M9 4.500h2" stroke="#b0b0b0" stroke-width="1"/></svg>
<div class="b" style="left:144px;top:605px;width:20px;height:21px;"></div>
<svg style="left:149px;top:611px" width="13" height="13" viewBox="0 0 13 13"><defs><linearGradient id="fg" x1="0" y1="0" x2="1" y2="0"><stop offset=".2" stop-color="#eef0ff"/><stop offset=".8" stop-color="#7c86c4"/></linearGradient></defs><path d="M.5 .7 H12 V1.900 L8.100 6.200 V12.400 L4.700 11.300 V6.200 L.5 1.900 Z" fill="url(#fg)" stroke="#000" stroke-width="1.100" stroke-linejoin="miter"/><path d="M.5 1 H12" stroke="#000" stroke-width="1.400"/></svg>
<div class="fd" style="left:297px;top:608px;width:58px;height:15px;"></div>
<div class="t fi" style="left:300px;top:610px;">Find</div>
<div class="tb" style="left:4px;top:631px;width:352px;height:132px;"></div>
<div class="bg" style="left:5px;top:632px;width:352px;height:16px;"></div>
<div class="ln" style="left:5px;top:648px;width:352px;height:1px;"></div>
<div class="wl" style="left:5px;top:632px;width:1px;height:16px;"></div>
<div class="ln" style="left:26px;top:632px;width:1px;height:16px;"></div>
<div class="wl" style="left:27px;top:632px;width:1px;height:16px;"></div>
<div class="ln" style="left:160px;top:632px;width:1px;height:16px;"></div>
<div class="t" style="left:29px;top:634px;">Address</div>
<div class="wl" style="left:161px;top:632px;width:1px;height:16px;"></div>
<div class="ln" style="left:250px;top:632px;width:1px;height:16px;"></div>
<div class="t" style="left:163px;top:634px;">Network</div>
<div class="wl" style="left:251px;top:632px;width:1px;height:16px;"></div>
<div class="ln" style="left:340px;top:632px;width:1px;height:16px;"></div>
<div class="t" style="left:253px;top:634px;">Interface</div>
<div class="wl" style="left:341px;top:632px;width:1px;height:16px;"></div>
<div class="ln" style="left:342px;top:632px;width:1px;height:16px;"></div>
<div class="wl" style="left:343px;top:632px;width:1px;height:16px;"></div>
<svg style="left:150px;top:636px" width="8" height="7" viewBox="0 0 8 7"><path d="M.7 6.300 L3.900 .5" stroke="#9a9a9a" stroke-width="1" fill="none"/><path d="M3.900 .5 L7.300 6.300 L.7 6.300" stroke="#fff" stroke-width="1" fill="none"/></svg>
<svg style="left:330px;top:636px" width="8" height="7" viewBox="0 0 8 7"><path d="M.7 .5 L7.300 .5 M.7 .5 L3.900 6.300" stroke="#b4b4b4" stroke-width="1" fill="none"/><path d="M7.300 .5 L3.900 6.300" stroke="#fff" stroke-width="1" fill="none"/></svg>
<svg style="left:346px;top:638px" width="9" height="5" viewBox="0 0 9 5"><path d="M0 0h9l-4.500 5z" fill="#000"/></svg>
<div class="gl" style="left:5px;top:663px;width:352px;height:1px;"></div>
<div class="gl" style="left:5px;top:678px;width:352px;height:1px;"></div>
<div class="gl" style="left:5px;top:693px;width:352px;height:1px;"></div>
<div class="gl" style="left:26px;top:649px;width:1px;height:45px;"></div>
<div class="gl" style="left:160px;top:649px;width:1px;height:45px;"></div>
<div class="gl" style="left:250px;top:649px;width:1px;height:45px;"></div>
<div class="gl" style="left:340px;top:649px;width:1px;height:45px;"></div>
<div class="wl" style="left:158px;top:649px;width:45px;height:15px;"></div>
<div class="t" style="left:8px;top:649px;">D</div>
<svg style="left:29px;top:650px" width="12" height="12" viewBox="0 0 12 12"><rect x="4.200" y="0" width="3.600" height="11.600" rx="1.600" fill="#a4aaa4"/><rect x=".3" y="3.300" width="11.400" height="3.600" rx="1.800" fill="#f2ea24" stroke="#b4ac20" stroke-width=".7"/></svg>
<svg style="left:29px;top:665px" width="12" height="12" viewBox="0 0 12 12"><rect x="4.200" y="0" width="3.600" height="11.600" rx="1.600" fill="#a4aaa4"/><rect x=".3" y="3.300" width="11.400" height="3.600" rx="1.800" fill="#f2ea24" stroke="#b4ac20" stroke-width=".7"/></svg>
<svg style="left:29px;top:680px" width="12" height="12" viewBox="0 0 12 12"><rect x="4.200" y="0" width="3.600" height="11.600" rx="1.600" fill="#a4aaa4"/><rect x=".3" y="3.300" width="11.400" height="3.600" rx="1.800" fill="#f2ea24" stroke="#b4ac20" stroke-width=".7"/></svg>
<div class="t" style="left:57px;top:650px;letter-spacing:.8px">WAN</div>
<div class="t n" style="left:45px;top:664px;">172.20.1.1/24</div>
<div class="t n" style="left:45px;top:679px;">172.31.1.254/24</div>
<div class="t n" style="left:163px;top:664px;">172.20.1.0</div>
<div class="t n" style="left:163px;top:679px;">172.31.1.0</div>
<div class="t" style="left:253px;top:649px;">ether1</div>
<div class="t u" style="left:253px;top:664px;">VOIP-VLAN</div>
<div class="t u" style="left:253px;top:679px;">PC-VLAN</div>
<div class="t s" style="left:8px;top:767px;">3 items</div>
<div class="fr" style="left:365px;top:579px;width:582px;height:210px;"></div>
<div class="wn" style="left:366px;top:580px;width:580px;height:208px;"></div>
<div class="bg" style="left:367px;top:580px;width:578px;height:207px;"></div>
<div class="ti" style="left:366px;top:580px;width:579px;height:22px;"></div>
<div class="tt i" style="left:371px;top:586px;">Route List</div>
<div class="wb" style="left:910px;top:584px;width:13px;height:13px;"></div>
<div class="wb" style="left:927px;top:584px;width:13px;height:13px;"></div>
<svg style="left:913px;top:587px" width="9" height="9" viewBox="0 0 9 9"><rect x=".5" y="1" width="8" height="7.500" fill="#f0f0f0" stroke="#2a2a2a" stroke-width="1"/><rect x="0" y="0" width="9" height="2" fill="#2a2a2a"/></svg>
<svg style="left:931px;top:588px" width="7" height="7" viewBox="0 0 7 7"><path d="M.8 .8 L6.200 6.200 M6.200 .8 L.8 6.200" stroke="#2a2a2a" stroke-width="1.900"/></svg>
<div class="wl" style="left:368px;top:629px;width:574px;height:1px;"></div>
<div class="wl" style="left:368px;top:629px;width:2px;height:156px;"></div>
<div class="ln" style="left:942px;top:629px;width:1px;height:156px;"></div>
<div class="ln" style="left:368px;top:784px;width:575px;height:1px;"></div>
<div class="wl" style="left:943px;top:629px;width:1px;height:157px;"></div>
<div class="wl" style="left:368px;top:785px;width:576px;height:1px;"></div>
<div class="tab a" style="left:370px;top:604px;width:48px;height:24px;"></div>
<div class="t c" style="left:372px;top:610px;width:46px;">Routes</div>
<div class="tab" style="left:420px;top:608px;width:56px;height:21px;"></div>
<div class="t c" style="left:420px;top:612px;width:57px;">Nexthops</div>
<div class="tab" style="left:479px;top:608px;width:38px;height:21px;"></div>
<div class="t c" style="left:479px;top:612px;width:39px;">Rules</div>
<div class="tab" style="left:520px;top:608px;width:32px;height:21px;"></div>
<div class="t c u" style="left:520px;top:612px;width:33px;">VRF</div>
<div class="b" style="left:370px;top:633px;width:20px;height:21px;"></div>
<svg style="left:375px;top:639px" width="12" height="12" viewBox="0 0 12 12"><path d="M4.5 .5h3v4h4v3h-4v4h-3v-4h-4v-3h4z" fill="#0a0ae6" stroke="#00007a" stroke-width="1"/></svg>
<div class="b" style="left:395px;top:633px;width:20px;height:21px;"></div>
<svg style="left:400px;top:643px" width="12" height="4" viewBox="0 0 12 4"><rect x=".5" y=".5" width="11" height="3" fill="#fff" stroke="#b4b4b4"/></svg>
<div class="b" style="left:425px;top:633px;width:20px;height:21px;"></div>
<svg style="left:430px;top:640px" width="12" height="10" viewBox="0 0 12 10"><path d="M.6 5.200 L2.400 3.400 L4.600 5.600 L9.800 .6 L11.400 2.300 L4.600 9.300 Z" fill="#f8f8f8" stroke="#b4b4b4" stroke-width=".8"/></svg>
<div class="b" style="left:450px;top:633px;width:20px;height:21px;"></div>
<svg style="left:455px;top:640px" width="11" height="11" viewBox="0 0 11 11"><path d="M.5 2 L2 .5 L5.500 4 L9 .5 L10.500 2 L7 5.500 L10.500 9 L9 10.500 L5.500 7 L2 10.500 L.5 9 L4 5.500 Z" fill="#f8f8f8" stroke="#b4b4b4" stroke-width=".8"/></svg>
<div class="b" style="left:480px;top:633px;width:20px;height:21px;"></div>
<svg style="left:484px;top:640px" width="13" height="10" viewBox="0 0 13 10"><path d="M3.500 .5h9v9h-12v-6z" fill="#f6f6f6" stroke="#8e8e8e"/><path d="M3.500 .5v3h-3" fill="none" stroke="#8e8e8e" stroke-width=".8"/><path d="M6 2.500h2M9 2.500h2M6 4.500h2M9 4.500h2" stroke="#b0b0b0" stroke-width="1"/></svg>
<div class="b" style="left:510px;top:633px;width:20px;height:21px;"></div>
<svg style="left:515px;top:639px" width="13" height="13" viewBox="0 0 13 13"><defs><linearGradient id="fg" x1="0" y1="0" x2="1" y2="0"><stop offset=".2" stop-color="#eef0ff"/><stop offset=".8" stop-color="#7c86c4"/></linearGradient></defs><path d="M.5 .7 H12 V1.900 L8.100 6.200 V12.400 L4.700 11.300 V6.200 L.5 1.900 Z" fill="url(#fg)" stroke="#000" stroke-width="1.100" stroke-linejoin="miter"/><path d="M.5 1 H12" stroke="#000" stroke-width="1.400"/></svg>
<div class="fd" style="left:823px;top:636px;width:58px;height:15px;"></div>
<div class="t fi" style="left:826px;top:638px;">Find</div>
<div class="fd" style="left:890px;top:636px;width:30px;height:15px;"></div>
<div class="t" style="left:893px;top:637px;">all</div>
<div class="b" style="left:924px;top:636px;width:13px;height:15px;"></div>
<div class="ln" style="left:924px;top:660px;width:1px;height:16px;"></div>
<div class="wl" style="left:925px;top:660px;width:1px;height:16px;"></div>
<svg style="left:927px;top:640px" width="9" height="9" viewBox="0 0 9 9"><path d="M.5 .5h8" stroke="#000" stroke-width="1.200"/><path d="M4.500 1v4" stroke="#000" stroke-width="2"/><path d="M.5 4h8l-4 4.500z" fill="#000"/></svg>
<div class="tb" style="left:370px;top:659px;width:569px;height:103px;"></div>
<div class="bg" style="left:371px;top:660px;width:569px;height:16px;"></div>
<div class="ln" style="left:371px;top:676px;width:569px;height:1px;"></div>
<div class="wl" style="left:371px;top:660px;width:1px;height:16px;"></div>
<div class="ln" style="left:410px;top:660px;width:1px;height:16px;"></div>
<div class="wl" style="left:411px;top:660px;width:1px;height:16px;"></div>
<div class="ln" style="left:510px;top:660px;width:1px;height:16px;"></div>
<div class="t" style="left:413px;top:662px;">Dst. Address</div>
<div class="wl" style="left:511px;top:660px;width:1px;height:16px;"></div>
<div class="ln" style="left:701px;top:660px;width:1px;height:16px;"></div>
<div class="t" style="left:513px;top:662px;">Gateway</div>
<div class="wl" style="left:702px;top:660px;width:1px;height:16px;"></div>
<div class="ln" style="left:761px;top:660px;width:1px;height:16px;"></div>
<div class="t" style="left:704px;top:662px;">Distance</div>
<div class="wl" style="left:762px;top:660px;width:1px;height:16px;"></div>
<div class="ln" style="left:841px;top:660px;width:1px;height:16px;"></div>
<div class="t" style="left:764px;top:662px;">Routing Mark</div>
<div class="wl" style="left:842px;top:660px;width:1px;height:16px;"></div>
<div class="ln" style="left:921px;top:660px;width:1px;height:16px;"></div>
<div class="t" style="left:844px;top:662px;">Pref. Source</div>
<div class="wl" style="left:922px;top:660px;width:1px;height:16px;"></div>
<svg style="left:500px;top:664px" width="8" height="7" viewBox="0 0 8 7"><path d="M.7 6.300 L3.900 .5" stroke="#9a9a9a" stroke-width="1" fill="none"/><path d="M3.900 .5 L7.300 6.300 L.7 6.300" stroke="#fff" stroke-width="1" fill="none"/></svg>
<svg style="left:691px;top:664px" width="8" height="7" viewBox="0 0 8 7"><path d="M.7 .5 L7.300 .5 M.7 .5 L3.900 6.300" stroke="#b4b4b4" stroke-width="1" fill="none"/><path d="M7.300 .5 L3.900 6.300" stroke="#fff" stroke-width="1" fill="none"/></svg>
<svg style="left:927px;top:666px" width="9" height="5" viewBox="0 0 9 5"><path d="M0 0h9l-4.500 5z" fill="#000"/></svg>
<div class="gl" style="left:371px;top:691px;width:569px;height:1px;"></div>
<div class="gl" style="left:371px;top:706px;width:569px;height:1px;"></div>
<div class="gl" style="left:371px;top:721px;width:569px;height:1px;"></div>
<div class="gl" style="left:371px;top:736px;width:569px;height:1px;"></div>
<div class="gl" style="left:410px;top:677px;width:1px;height:60px;"></div>
<div class="gl" style="left:510px;top:677px;width:1px;height:60px;"></div>
<div class="gl" style="left:701px;top:677px;width:1px;height:60px;"></div>
<div class="gl" style="left:761px;top:677px;width:1px;height:60px;"></div>
<div class="gl" style="left:841px;top:677px;width:1px;height:60px;"></div>
<div class="gl" style="left:921px;top:677px;width:1px;height:60px;"></div>
<div class="t u" style="left:373px;top:677px;">DAS</div>
<svg style="left:416px;top:679px" width="7" height="11" viewBox="0 0 7 11"><path d="M.5 .8 L6.300 5.500 L.5 10.200 Z" fill="#2e9a2e" stroke="#0c4a0c" stroke-width="1"/></svg>
<div class="t n" style="left:429px;top:677px;">0.0.0.0/0</div>
<div class="t" style="left:512px;top:677px;"></div>
<div class="t r" style="left:648.3px;top:677px;width:110px;">1</div>
<div class="t n" style="left:844px;top:677px;"></div>
<div class="t u" style="left:373px;top:692px;">DAC</div>
<svg style="left:416px;top:694px" width="7" height="11" viewBox="0 0 7 11"><path d="M.5 .8 L6.300 5.500 L.5 10.200 Z" fill="#2e9a2e" stroke="#0c4a0c" stroke-width="1"/></svg>
<div class="t" style="left:430px;top:693px;letter-spacing:.8px">WAN</div>
<div class="t" style="left:512px;top:692px;">ether1 reachable</div>
<div class="t r" style="left:648.3px;top:692px;width:110px;">0</div>
<div class="t" style="left:857px;top:693px;letter-spacing:.8px">WAN</div>
<div class="t u" style="left:373px;top:707px;">DAC</div>
<svg style="left:416px;top:709px" width="7" height="11" viewBox="0 0 7 11"><path d="M.5 .8 L6.300 5.500 L.5 10.200 Z" fill="#2e9a2e" stroke="#0c4a0c" stroke-width="1"/></svg>
<div class="t n" style="left:429px;top:707px;">172.20.1.0/24</div>
<div class="t" style="left:512px;top:707px;">VOIP-VLAN reachable</div>
<div class="t r" style="left:648.3px;top:707px;width:110px;">0</div>
<div class="t n" style="left:844px;top:707px;">172.20.1.1</div>
<div class="t u" style="left:373px;top:722px;">DAC</div>
<svg style="left:416px;top:724px" width="7" height="11" viewBox="0 0 7 11"><path d="M.5 .8 L6.300 5.500 L.5 10.200 Z" fill="#2e9a2e" stroke="#0c4a0c" stroke-width="1"/></svg>
<div class="t n" style="left:429px;top:722px;">172.31.1.0/24</div>
<div class="t" style="left:512px;top:722px;">PC-VLAN reachable</div>
<div class="t r" style="left:648.3px;top:722px;width:110px;">0</div>
<div class="t n" style="left:844px;top:722px;">172.31.1.254</div>
<div class="ln" style="left:370px;top:764px;width:1px;height:20px;"></div>
<div class="t s" style="left:374px;top:766px;">4 items</div>
<div class="fr" style="left:1px;top:790px;width:542px;height:169px;"></div>
<div class="wn" style="left:2px;top:791px;width:540px;height:167px;"></div>
<div class="bg" style="left:3px;top:791px;width:538px;height:166px;"></div>
<div class="ti" style="left:2px;top:791px;width:539px;height:22px;"></div>
<div class="tt i" style="left:7px;top:797px;">DHCP Server</div>
<div class="wb" style="left:506px;top:795px;width:13px;height:13px;"></div>
<div class="wb" style="left:523px;top:795px;width:13px;height:13px;"></div>
<svg style="left:509px;top:798px" width="9" height="9" viewBox="0 0 9 9"><rect x=".5" y="1" width="8" height="7.500" fill="#f0f0f0" stroke="#2a2a2a" stroke-width="1"/><rect x="0" y="0" width="9" height="2" fill="#2a2a2a"/></svg>
<svg style="left:527px;top:799px" width="7" height="7" viewBox="0 0 7 7"><path d="M.8 .8 L6.200 6.200 M6.200 .8 L.8 6.200" stroke="#2a2a2a" stroke-width="1.900"/></svg>
<div class="wl" style="left:4px;top:840px;width:534px;height:1px;"></div>
<div class="wl" style="left:4px;top:840px;width:2px;height:115px;"></div>
<div class="ln" style="left:538px;top:840px;width:1px;height:115px;"></div>
<div class="ln" style="left:4px;top:954px;width:535px;height:1px;"></div>
<div class="wl" style="left:539px;top:840px;width:1px;height:116px;"></div>
<div class="wl" style="left:4px;top:955px;width:536px;height:1px;"></div>
<div class="tab a" style="left:6px;top:815px;width:44px;height:24px;"></div>
<div class="t c u" style="left:8px;top:821px;width:42px;">DHCP</div>
<div class="tab" style="left:52px;top:819px;width:57px;height:21px;"></div>
<div class="t c" style="left:52px;top:823px;width:58px;">Networks</div>
<div class="tab" style="left:112px;top:819px;width:44px;height:21px;"></div>
<div class="t c" style="left:112px;top:823px;width:45px;">Leases</div>
<div class="tab" style="left:159px;top:819px;width:47px;height:21px;"></div>
<div class="t c" style="left:159px;top:823px;width:48px;">Options</div>
<div class="tab" style="left:209px;top:819px;width:66px;height:21px;"></div>
<div class="t c" style="left:209px;top:823px;width:67px;">Option Sets</div>
<div class="tab" style="left:278px;top:819px;width:84px;height:21px;"></div>
<div class="t c" style="left:278px;top:823px;width:85px;">Vendor Classes</div>
<div class="tab" style="left:365px;top:819px;width:38px;height:21px;"></div>
<div class="t c" style="left:365px;top:823px;width:39px;">Alerts</div>
<div class="b" style="left:6px;top:844px;width:20px;height:21px;"></div>
<svg style="left:11px;top:850px" width="12" height="12" viewBox="0 0 12 12"><path d="M4.5 .5h3v4h4v3h-4v4h-3v-4h-4v-3h4z" fill="#0a0ae6" stroke="#00007a" stroke-width="1"/></svg>
<div class="b" style="left:31px;top:844px;width:20px;height:21px;"></div>
<svg style="left:36px;top:854px" width="12" height="4" viewBox="0 0 12 4"><rect x=".5" y=".5" width="11" height="3" fill="#fff" stroke="#b4b4b4"/></svg>
<div class="b" style="left:61px;top:844px;width:20px;height:21px;"></div>
<svg style="left:66px;top:851px" width="12" height="10" viewBox="0 0 12 10"><path d="M.6 5.200 L2.400 3.400 L4.600 5.600 L9.800 .6 L11.400 2.300 L4.600 9.300 Z" fill="#f8f8f8" stroke="#b4b4b4" stroke-width=".8"/></svg>
<div class="b" style="left:86px;top:844px;width:20px;height:21px;"></div>
<svg style="left:91px;top:851px" width="11" height="11" viewBox="0 0 11 11"><path d="M.5 2 L2 .5 L5.500 4 L9 .5 L10.500 2 L7 5.500 L10.500 9 L9 10.500 L5.500 7 L2 10.500 L.5 9 L4 5.500 Z" fill="#f8f8f8" stroke="#b4b4b4" stroke-width=".8"/></svg>
<div class="b" style="left:116px;top:844px;width:20px;height:21px;"></div>
<svg style="left:121px;top:850px" width="13" height="13" viewBox="0 0 13 13"><defs><linearGradient id="fg" x1="0" y1="0" x2="1" y2="0"><stop offset=".2" stop-color="#eef0ff"/><stop offset=".8" stop-color="#7c86c4"/></linearGradient></defs><path d="M.5 .7 H12 V1.900 L8.100 6.200 V12.400 L4.700 11.300 V6.200 L.5 1.900 Z" fill="url(#fg)" stroke="#000" stroke-width="1.100" stroke-linejoin="miter"/><path d="M.5 1 H12" stroke="#000" stroke-width="1.400"/></svg>
<div class="b" style="left:146px;top:844px;width:77px;height:21px;"></div>
<div class="t c" style="left:146px;top:848px;width:79px;">DHCP Config</div>
<div class="b" style="left:229px;top:844px;width:76px;height:21px;"></div>
<div class="t c" style="left:229px;top:848px;width:78px;">DHCP Setup</div>
<div class="fd" style="left:476px;top:847px;width:58px;height:15px;"></div>
<div class="t fi" style="left:479px;top:849px;">Find</div>
<div class="tb" style="left:6px;top:870px;width:529px;height:62px;"></div>
<div class="bg" style="left:7px;top:871px;width:529px;height:16px;"></div>
<div class="ln" style="left:7px;top:887px;width:529px;height:1px;"></div>
<div class="wl" style="left:7px;top:871px;width:1px;height:16px;"></div>
<div class="ln" style="left:22px;top:871px;width:1px;height:16px;"></div>
<div class="wl" style="left:23px;top:871px;width:1px;height:16px;"></div>
<div class="ln" style="left:122px;top:871px;width:1px;height:16px;"></div>
<div class="t" style="left:25px;top:873px;">Name</div>
<div class="wl" style="left:123px;top:871px;width:1px;height:16px;"></div>
<div class="ln" style="left:222px;top:871px;width:1px;height:16px;"></div>
<div class="t" style="left:125px;top:873px;">Interface</div>
<div class="wl" style="left:223px;top:871px;width:1px;height:16px;"></div>
<div class="ln" style="left:282px;top:871px;width:1px;height:16px;"></div>
<div class="t" style="left:225px;top:873px;">Relay</div>
<div class="wl" style="left:283px;top:871px;width:1px;height:16px;"></div>
<div class="ln" style="left:382px;top:871px;width:1px;height:16px;"></div>
<div class="t" style="left:285px;top:873px;">Lease Time</div>
<div class="wl" style="left:383px;top:871px;width:1px;height:16px;"></div>
<div class="ln" style="left:462px;top:871px;width:1px;height:16px;"></div>
<div class="t" style="left:385px;top:873px;">Address Pool</div>
<div class="wl" style="left:463px;top:871px;width:1px;height:16px;"></div>
<div class="ln" style="left:512px;top:871px;width:1px;height:16px;"></div>
<div class="t" style="left:465px;top:873px;">Add AR...</div>
<div class="wl" style="left:513px;top:871px;width:1px;height:16px;"></div>
<div class="ln" style="left:521px;top:871px;width:1px;height:16px;"></div>
<div class="wl" style="left:522px;top:871px;width:1px;height:16px;"></div>
<svg style="left:112px;top:875px" width="8" height="7" viewBox="0 0 8 7"><path d="M.7 6.300 L3.900 .5" stroke="#9a9a9a" stroke-width="1" fill="none"/><path d="M3.900 .5 L7.300 6.300 L.7 6.300" stroke="#fff" stroke-width="1" fill="none"/></svg>
<svg style="left:524px;top:877px" width="9" height="5" viewBox="0 0 9 5"><path d="M0 0h9l-4.500 5z" fill="#000"/></svg>
<div class="gl" style="left:7px;top:902px;width:529px;height:1px;"></div>
<div class="gl" style="left:22px;top:888px;width:1px;height:15px;"></div>
<div class="gl" style="left:122px;top:888px;width:1px;height:15px;"></div>
<div class="gl" style="left:222px;top:888px;width:1px;height:15px;"></div>
<div class="gl" style="left:282px;top:888px;width:1px;height:15px;"></div>
<div class="gl" style="left:382px;top:888px;width:1px;height:15px;"></div>
<div class="gl" style="left:462px;top:888px;width:1px;height:15px;"></div>
<div class="gl" style="left:512px;top:888px;width:1px;height:15px;"></div>
<div class="t u" style="left:25px;top:888px;">PC-DHCP</div>
<div class="t u" style="left:125px;top:888px;">PC-VLAN</div>
<div class="t r n" style="left:269.3px;top:888px;width:110px;">00:10:00</div>
<div class="t u" style="left:385px;top:888px;">PC-POOL</div>
<div class="t" style="left:465px;top:888px;">no</div>
<div class="ln" style="left:6px;top:934px;width:1px;height:20px;"></div>
<div class="t s" style="left:10px;top:936px;">1 item</div>
</body></html>
